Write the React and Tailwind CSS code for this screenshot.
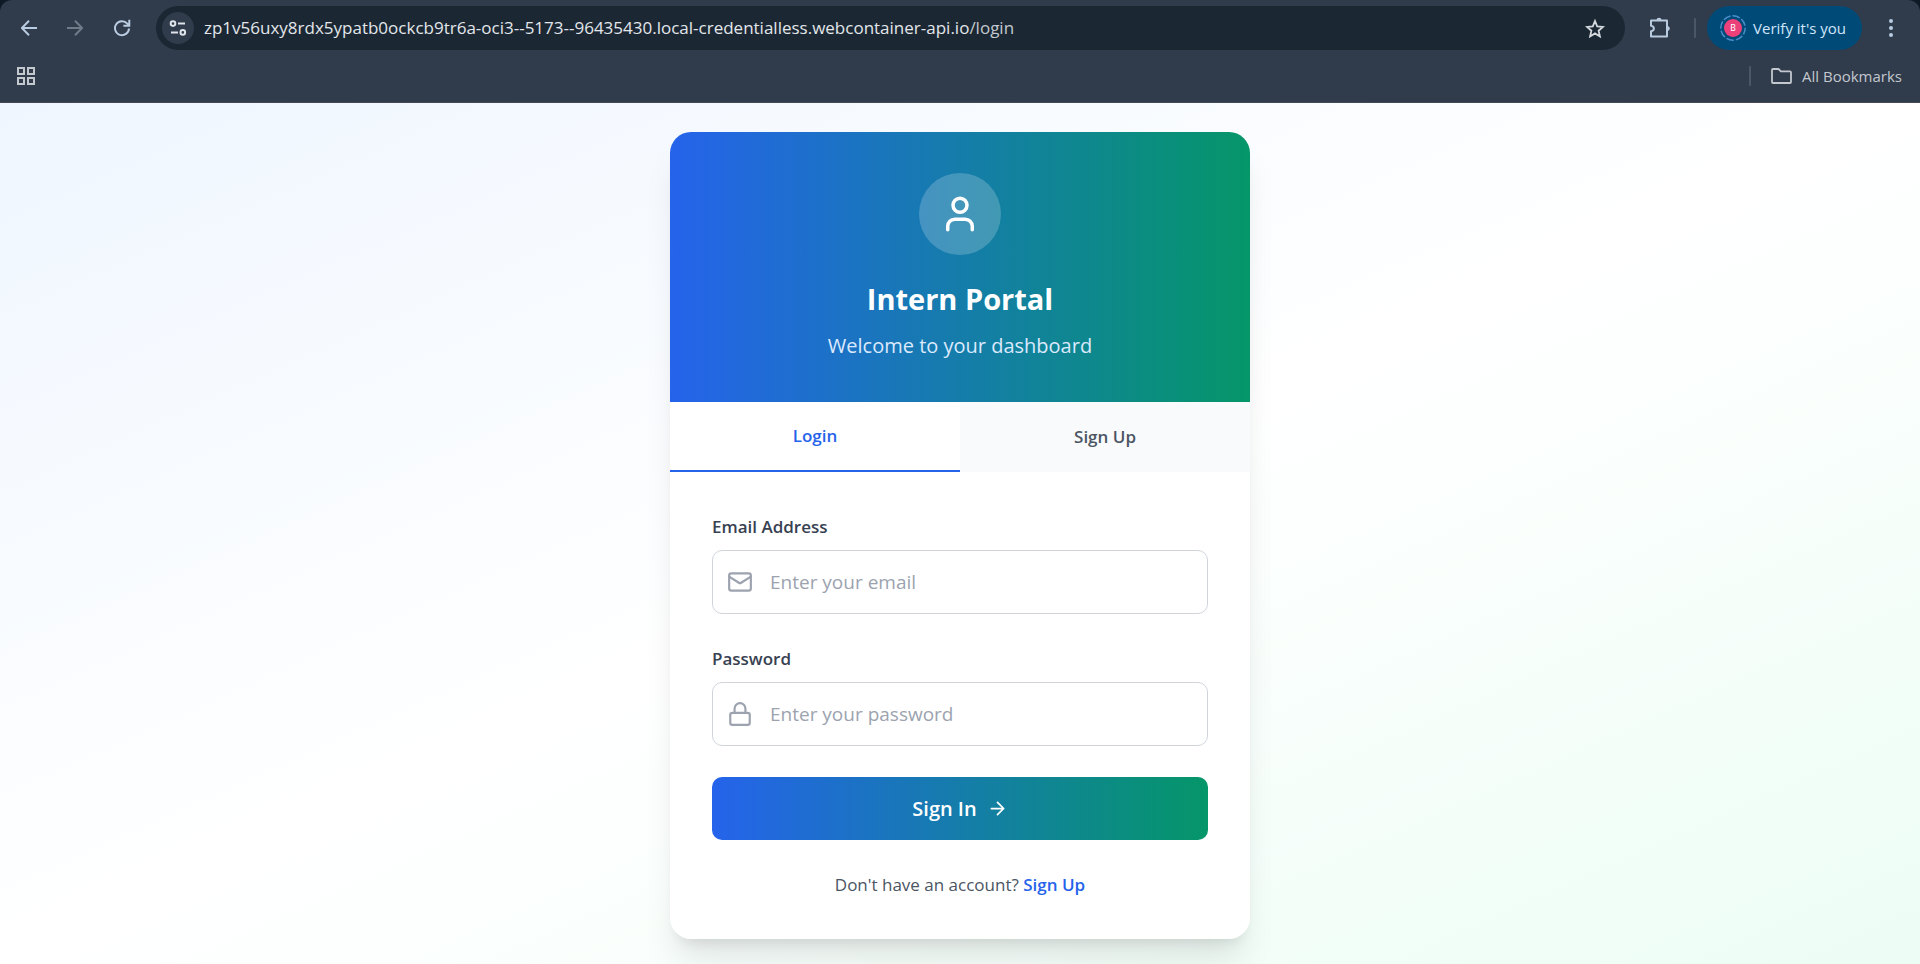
import { useState } from "react";

const gradient = "bg-[linear-gradient(to_right,#2563eb,#059669)]";

function Chrome() {
  return (
    <header className="border-b border-[#444a54] bg-[#0e1a26] text-[#b9cbe0]">
      <div className="rounded-t-[12px] bg-[#303b4b]">
        <nav aria-label="Browser" className="flex items-center pt-1.5 pr-[23px] pl-4">
          <button aria-label="Back" className="flex size-[26px] items-center justify-center">
            <svg viewBox="0 0 16 16" className="size-4" fill="none" stroke="#b9cbe0" strokeWidth="2">
              <path d="M8 .8.9 8 8 15.2M1.2 8H16" />
            </svg>
          </button>
          <button aria-label="Forward" className="ml-5 flex size-[26px] items-center justify-center">
            <svg viewBox="0 0 16 16" className="size-4" fill="none" stroke="#707a88" strokeWidth="2">
              <path d="m8 .8 7.1 7.2L8 15.2M14.8 8H0" />
            </svg>
          </button>
          <button aria-label="Reload" className="ml-5 flex size-[28px] items-center justify-center">
            <svg viewBox="0 0 18 18" className="size-[18px]" fill="none" stroke="#b9cbe0" strokeWidth="2">
              <path d="M16 9.5A7 7 0 1 1 14.3 4.6L16 6.3M16.3.8V6.7H10.4" />
            </svg>
          </button>
          <div className="ml-5 flex h-11 flex-1 items-center rounded-full bg-[#1b2834] pr-5 pl-1.5">
            <button aria-label="Site information" className="flex size-8 items-center justify-center rounded-full bg-[#303b4b]">
              <svg viewBox="0 0 18 16" className="h-4 w-[18px]" fill="none" stroke="#dfe4ea" strokeWidth="2">
                <circle cx="4" cy="3.6" r="2.3" />
                <path d="M9 3.6h7M2 12.4h7" />
                <circle cx="13.8" cy="12.4" r="2.3" />
              </svg>
            </button>
            <div className="ml-2.5 flex-1 text-[17px] leading-6 whitespace-nowrap text-[#e3e6ea]">
              zp1v56uxy8rdx5ypatb0ockcb9tr6a-oci3--5173--96435430.local-credentialless.webcontainer-api.io
              <span className="text-[#c3c8ce]">/login</span>
            </div>
            <button aria-label="Bookmark this page">
              <svg viewBox="0 0 20 19" className="h-[19px] w-5" fill="none" stroke="#d5d9de" strokeWidth="1.8">
                <path d="m10 2 2.2 5.4 5.8.5-4.4 3.8 1.3 5.7-4.9-3-4.9 3 1.3-5.7L2 7.9l5.8-.5z" />
              </svg>
            </button>
          </div>
          <button aria-label="Extensions" className="ml-6">
            <svg viewBox="0 0 22 22" className="size-[22px]" fill="none" stroke="#b9cbe0" strokeWidth="2" strokeLinejoin="round">
              <path d="M2 3.5h16v16H2v-5.2c3.8-.6 3.8-5 0-5.6z" />
              <path d="M7.5 3a2.5 2.3 0 0 1 5 0zM18.5 9a2.3 2.5 0 0 1 0 5z" fill="#b9cbe0" stroke="none" />
            </svg>
          </button>
          <span className="ml-[23px] h-5 w-0.5 rounded-full bg-[#4a5766]" />
          <button className="ml-[11px] flex h-11 items-center rounded-full bg-[#004a77] pr-4 pl-3 text-[15px] text-[#d0e6fb]">
            <svg viewBox="0 0 28 28" className="size-7">
              <circle cx="14" cy="14" r="12.2" fill="none" stroke="#4a8fcb" strokeWidth="1.5" strokeDasharray="7.6 2" strokeDashoffset="1" />
              <circle cx="14" cy="14" r="9" fill="#ec407a" />
              <text x="14" y="17.2" textAnchor="middle" fontSize="9" fill="#fff" fontFamily="Roboto, sans-serif">B</text>
            </svg>
            <span className="ml-1.5">Verify it's you</span>
          </button>
          <button aria-label="Menu" className="ml-[23px] flex w-3 justify-center">
            <svg viewBox="0 0 4 18" className="h-[18px] w-1" fill="#b9cbe0">
              <circle cx="2" cy="2" r="2" />
              <circle cx="2" cy="9" r="2" />
              <circle cx="2" cy="16" r="2" />
            </svg>
          </button>
        </nav>
        <div className="flex h-[52px] items-center justify-between pr-[18px] pl-[17px]">
          <button aria-label="Apps">
            <svg viewBox="0 0 18 18" className="size-[18px]" fill="none" stroke="#c3c8ce" strokeWidth="2">
              <path d="M1 1h6v6H1zM11 1h6v6h-6zM1 11h6v6H1zM11 11h6v6h-6z" />
            </svg>
          </button>
          <div className="flex items-center">
            <span className="h-5 w-0.5 rounded-full bg-[#4a5766]" />
            <button className="ml-5 flex items-center text-[15px] text-[#c3c8ce]">
              <svg viewBox="0 0 21 16" className="h-4 w-[21px]" fill="none" stroke="#c3c8ce" strokeWidth="1.8" strokeLinejoin="round">
                <path d="M1 2a1 1 0 0 1 1-1h5.5l2.4 2.4H19a1 1 0 0 1 1 1V14a1 1 0 0 1-1 1H2a1 1 0 0 1-1-1z" />
              </svg>
              <span className="ml-2.5">All Bookmarks</span>
            </button>
          </div>
        </div>
      </div>
    </header>
  );
}

function Field({ id, label, type, placeholder, children }) {
  return (
    <div>
      <label htmlFor={id} className="mb-2.5 block text-[17px] leading-[26px] font-semibold text-[#374151]">
        {label}
      </label>
      <div className="relative">
        <svg
          viewBox="0 0 24 24"
          className="pointer-events-none absolute inset-y-0 left-[15px] my-auto size-[26px]"
          fill="none"
          stroke="#9ca3af"
          strokeWidth="2"
          strokeLinecap="round"
          strokeLinejoin="round"
        >
          {children}
        </svg>
        <input
          id={id}
          type={type}
          placeholder={placeholder}
          className="h-16 w-full rounded-[10px] border border-[#d1d5db] pr-4 pl-[57px] text-[19px] text-[#111827] placeholder:text-[#9ca3af]"
        />
      </div>
    </div>
  );
}

export default function App() {
  const [tab, setTab] = useState("login");
  const on = "border-b-2 border-[#2563eb] bg-white text-[#2563eb]";
  const off = "bg-[#f9fafb] text-[#4b5563]";
  return (
    <div className="flex min-h-screen flex-col font-['Open_Sans','Noto_Sans',sans-serif]">
      <Chrome />
      <main className="flex flex-1 justify-center bg-[linear-gradient(to_bottom_right,#eff6ff,#ffffff,#ecfdf5)] px-5 pt-[29px] pb-[25px]">
        <div className="w-full max-w-[580px] self-start overflow-hidden rounded-[21px] bg-white shadow-[0_26px_33px_-7px_rgba(0,0,0,0.1),0_10px_13px_-8px_rgba(0,0,0,0.1)]">
          <div className={`${gradient} flex h-[270px] flex-col items-center pt-[41px] text-white`}>
            <div className="flex size-[82px] items-center justify-center rounded-full bg-white/20">
              <svg viewBox="0 0 24 24" className="size-[42px]" fill="none" stroke="#fff" strokeWidth="2" strokeLinecap="round">
                <circle cx="12" cy="7" r="4" />
                <path d="M19 21v-2a4 4 0 0 0-4-4H9a4 4 0 0 0-4 4v2" />
              </svg>
            </div>
            <h1 className="mt-[23px] text-[29px] leading-[42px] font-bold">Intern Portal</h1>
            <p className="mt-2.5 text-[20px] leading-8 text-[#dbeafe]">Welcome to your dashboard</p>
          </div>
          <div className="grid h-[70px] grid-cols-2 text-[17px] font-semibold">
            <button onClick={() => setTab("login")} className={tab === "login" ? on : off}>
              Login
            </button>
            <button onClick={() => setTab("signup")} className={tab === "signup" ? on : off}>
              Sign Up
            </button>
          </div>
          <div className="px-[42px] pt-[42px] pb-[41px]">
            <form onSubmit={(e) => e.preventDefault()}>
              <div className="flex flex-col gap-8">
                <Field id="email" label="Email Address" type="email" placeholder="Enter your email">
                  <rect x="2" y="4" width="20" height="16" rx="2" />
                  <path d="m22 7-8.97 5.7a1.94 1.94 0 0 1-2.06 0L2 7" />
                </Field>
                <Field id="password" label="Password" type="password" placeholder="Enter your password">
                  <rect x="3" y="11" width="18" height="11" rx="2" />
                  <path d="M7 11V7a5 5 0 0 1 10 0v4" />
                </Field>
              </div>
              <button
                type="submit"
                className={`${gradient} mt-[31px] flex h-[63px] w-full items-center justify-center gap-2.5 rounded-[10px] text-[20px] font-semibold text-white`}
              >
                Sign In
                <svg viewBox="0 0 24 24" className="size-[21px]" fill="none" stroke="currentColor" strokeWidth="2" strokeLinecap="round" strokeLinejoin="round">
                  <path d="M5 12h14M12 5l7 7-7 7" />
                </svg>
              </button>
            </form>
            <p className="mt-8 text-center text-[17px] leading-[26px] text-[#4b5563]">
              Don't have an account?{" "}
              <a href="#signup" className="font-semibold text-[#2563eb]">
                Sign Up
              </a>
            </p>
          </div>
        </div>
      </main>
    </div>
  );
}
